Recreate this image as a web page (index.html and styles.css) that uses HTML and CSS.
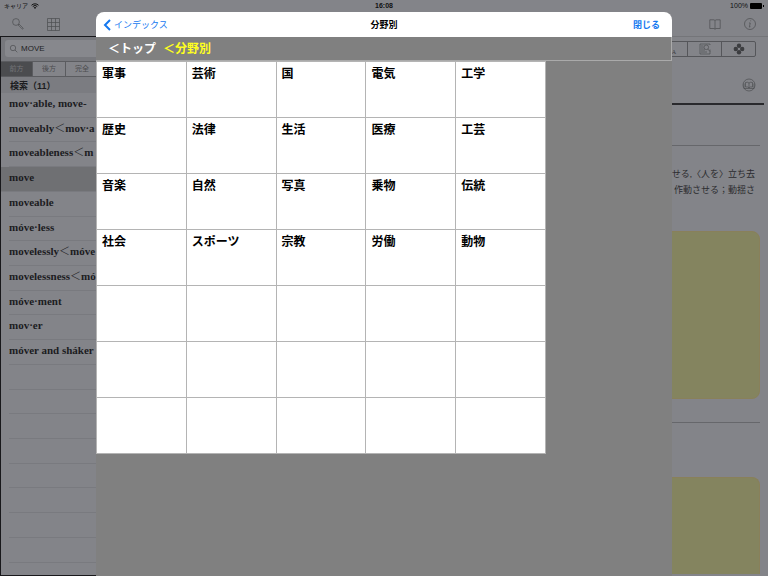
FILE: index.html
```html
<!DOCTYPE html>
<html lang="ja">
<head>
<meta charset="UTF-8">
<meta name="viewport" content="width=device-width, initial-scale=1">
<title>分野別</title>
<link rel="stylesheet" href="styles.css">
</head>
<body>

<div class="status">
    <span class="carrier">キャリア
        <svg width="8" height="6" viewBox="0 0 16 12"><path d="M1 4.5a10 10 0 0 1 14 0M3.5 7a6.500 6.500 0 0 1 9 0" fill="none" stroke="#111" stroke-width="2"/><path d="M5.500 9a3.600 3.600 0 0 1 5 0L8 12z" fill="#111"/></svg>
    </span>
    <span class="clock">16:08</span>
    <span class="battery">100%
        <svg width="14" height="6" viewBox="0 0 14 6"><rect width="12" height="6" rx="1"/><rect x="13" y="2" width="1" height="2"/></svg>
    </span>
</div>

<div class="toolbar">
    <button class="icon" aria-label="検索"><svg width="12" height="12" viewBox="0 0 12 12"><circle cx="4" cy="4" r="3.400"/><path d="M6.400 6.400L7 6l4 4q.5.700-.2 1t-1-.3L6.200 7z"/></svg></button>
    <button class="icon" aria-label="インデックス"><svg width="13" height="13" viewBox="0 0 13 13"><path d="M.5.500h12v12H.5zM4.500.500v12M8.500.500v12M.5 4.500h12M.5 8.500h12"/></svg></button>
    <span class="space"></span>
    <button class="icon" aria-label="辞書"><svg width="12" height="12" viewBox="0 0 12 12"><path d="M.8 1.800H5l1 .7 1-.7h4.200v8.700H7l-1 .7-1-.7H.8zM6 2.500v8.700"/></svg></button>
    <button class="icon" aria-label="情報"><svg width="12" height="12" viewBox="0 0 12 12"><circle cx="6" cy="6" r="5.500"/><path d="M5 5h1.300L5.300 9q.3.600 1.200-.3M6.300 2.800h.8"/></svg></button>
</div>

<div class="split">
    <div class="side">
        <div class="searchbar">
            <label class="field">
                <svg width="9" height="9" viewBox="0 0 9 9"><circle cx="4" cy="4" r="2.700"/><path d="M6 6l2.300 2.300"/></svg>
                <input type="text" value="MOVE" aria-label="検索語">
            </label>
        </div>
        <div class="tabs">
            <button class="active">前方</button>
            <button>後方</button>
            <button>完全</button>
        </div>
        <h2>検索（11）</h2>
        <ul class="words">
            <li>mov·able, move-</li>
            <li>moveably<i>＜</i>mov·a</li>
            <li>moveableness<i>＜</i>m</li>
            <li class="selected">move</li>
            <li>moveable</li>
            <li>móve·less</li>
            <li>movelessly<i>＜</i>móve</li>
            <li>movelessness<i>＜</i>mó</li>
            <li>móve·ment</li>
            <li>mov·er</li>
            <li>móver and sháker</li>
            <li></li>
            <li></li>
            <li></li>
            <li></li>
            <li></li>
            <li></li>
            <li></li>
            <li></li>
        </ul>
    </div>

    <div class="entry">
        <div class="segments">
            <button class="size">A</button>
            <button aria-label="本文検索"><svg width="12" height="12" viewBox="0 0 12 12"><path d="M11 6.500V11H1V1h10v1M2 3h2.500M2 5h2.500M2 7h4M2 9h6M8.800 6L11 8.500"/><circle cx="7.300" cy="4.300" r="2.300"/></svg></button>
            <button aria-label="移動"><svg class="clover" width="12" height="12" viewBox="0 0 12 12"><circle cx="6" cy="2.800" r="2.200"/><circle cx="6" cy="9.200" r="2.200"/><circle cx="2.800" cy="6" r="2.200"/><circle cx="9.200" cy="6" r="2.200"/></svg></button>
        </div>
        <div class="headword">
            <button class="icon" aria-label="単語帳"><svg width="14" height="14" viewBox="0 0 14 14"><circle cx="7" cy="7" r="6"/><path d="M3.500 4.500Q5.500 3.700 7 5q1.500-1.300 3.500-.5V9Q8.500 8.500 7 9.700 5.500 8.500 3.500 9zM7 5v4.700M2 5.500v5h10v-5"/></svg></button>
        </div>
        <div class="section"></div>
        <p>せる,〈人を〉立ち去<br>作動させる；動揺さ</p>
        <div class="card"></div>
        <div class="section rule"></div>
        <div class="card last"></div>
    </div>
</div>

<div class="modal" role="dialog" aria-labelledby="modalTitle">
    <div class="navbar">
        <button class="back"><svg width="8" height="12" viewBox="0 0 8 12"><path d="M7 1L2 6l5 5"/></svg>インデックス</button>
        <h1 id="modalTitle">分野別</h1>
        <button class="close">閉じる</button>
    </div>
    <nav class="crumbs">
        <a href="#">＜トップ</a>
        <a href="#" class="current">＜分野別</a>
    </nav>
    <div class="grid">
        <button>軍事</button><button>芸術</button><button>国</button><button>電気</button><button>工学</button>
        <button>歴史</button><button>法律</button><button>生活</button><button>医療</button><button>工芸</button>
        <button>音楽</button><button>自然</button><button>写真</button><button>乗物</button><button>伝統</button>
        <button>社会</button><button>スポーツ</button><button>宗教</button><button>労働</button><button>動物</button>
        <span></span><span></span><span></span><span></span><span></span>
        <span></span><span></span><span></span><span></span><span></span>
        <span></span><span></span><span></span><span></span><span></span>
    </div>
</div>

</body>
</html>
```

FILE: styles.css
```css
* { box-sizing: border-box; }
body { margin: 0; height: 100vh; overflow: hidden; position: relative; display: flex; flex-direction: column; background: #838489; color: #1c1c1f; font-family: "Liberation Sans", "Noto Sans CJK JP", sans-serif; }
button { margin: 0; padding: 0; border: 0; background: none; color: inherit; font: inherit; cursor: pointer; }
svg { display: block; flex: none; }
h1, h2, p, ul { margin: 0; padding: 0; }

/* status bar */
.status { display: grid; grid-template-columns: 1fr auto 1fr; align-items: center; height: 12px; padding: 0 4px; font-size: 7px; line-height: 12px; color: #111; }
.carrier, .battery { display: flex; align-items: center; gap: 3px; }
.carrier { font-size: 6px; }
.clock { font-weight: bold; }
.battery { justify-content: flex-end; gap: 2px; }

/* toolbar */
.toolbar { display: flex; align-items: center; height: 24px; padding: 0 12px; gap: 23px; }
.space { flex: 1; }
.icon svg, .segments svg, .field svg { fill: none; stroke: #4c4d50; stroke-width: 0.7; }

.split { flex: 1; min-height: 0; display: flex; }

/* word list */
.side { width: 240px; display: flex; flex-direction: column; border: solid #18181b; border-width: 1px 0 1px 1px; }
.searchbar { height: 24px; padding: 3px 4px; background: #77787d; }
.field { display: flex; align-items: center; height: 17px; padding: 0 4px; gap: 3px; border-radius: 3px; background: #87888d; }
.field input { flex: 1; min-width: 0; padding: 0; border: 0; outline: 0; background: none; color: #222225; font: 8px/16px "Liberation Sans", sans-serif; }
.tabs { display: flex; height: 16px; border: solid #5b5c60; border-width: 1px 0; }
.tabs button { width: 33px; border-right: 1px solid #5b5c60; font-size: 7px; line-height: 14px; color: #4c4d50; }
.tabs .active { width: 32px; background: #4b4c4f; color: #747579; }
.side h2 { height: 16px; padding-left: 9px; background: #7b7c81; font-size: 9px; line-height: 18px; }
.words { flex: 1; min-height: 0; display: grid; grid-template-rows: repeat(19, minmax(0, 2fr)) minmax(0, 1fr); list-style: none; font: bold 11px/20px "Liberation Serif", "Noto Sans CJK JP", serif; white-space: nowrap; overflow: hidden; }
.words li { margin-left: 8px; border-bottom: 1px solid #797a7f; overflow: hidden; }
.words i { font-style: normal; font-weight: 300; }
.words .selected { margin-left: 0; padding-left: 8px; background: #6f7073; }

/* dictionary entry */
.entry { flex: 1; min-width: 0; display: flex; flex-direction: column; padding: 0 8px 2px 16px; border-top: 1px solid #747579; }
.segments { display: flex; align-self: flex-end; height: 16px; margin: 4px 4px 0 0; border: 1px solid #55565a; border-radius: 2px; }
.segments button { display: flex; align-items: center; justify-content: center; width: 34px; border-left: 1px solid #55565a; }
.segments .size { align-items: flex-end; border-left: 0; padding-left: 8px; font: 6px/8px "Liberation Serif", serif; color: #3c3c3f; }
.segments .clover { fill: #3c3d40; stroke: none; }
.headword { display: flex; justify-content: flex-end; align-items: center; height: 48px; margin-right: -4px; padding: 10px 8px 0 0; border-bottom: 2px solid #29292d; }
.section { height: 41px; border-bottom: 1px solid #66676b; }
.entry p { margin: 20px 5px 0 0; text-align: right; font: 9px/16px "Liberation Serif", "Noto Sans CJK JP", serif; color: #2b2b2e; white-space: nowrap; }
.card { height: 168px; margin-top: 33px; border: 1px solid #89805a; border-radius: 8px; background: #84845f; }
.section.rule { height: 24px; }
.card.last { flex: 1; height: auto; margin-top: 54px; border-bottom: 0; border-radius: 8px 8px 0 0; }

/* category dialog */
.modal { position: absolute; top: 12px; bottom: 0; left: 0; right: 0; width: 75%; margin: 0 auto; display: flex; flex-direction: column; border-radius: 8px 8px 0 0; overflow: hidden; background: #808080; }
.navbar { display: grid; grid-template-columns: 1fr auto 1fr; align-items: center; height: 25px; padding: 0 12px 0 7px; background: #fff; font-size: 9px; line-height: 14px; color: #1478f0; }
.navbar h1 { padding-left: 5px; font-size: 9px; color: #000; }
.back { display: flex; align-items: center; gap: 3px; }
.back svg { fill: none; stroke: #1478f0; stroke-width: 2; }
.close { justify-self: end; font-weight: bold; }
.crumbs { display: flex; align-items: center; gap: 7px; height: 24px; padding-left: 12px; border: solid #aaa; border-width: 0 1px 1px 0; font-size: 12px; line-height: 20px; font-weight: bold; }
.crumbs a { color: #fff; text-decoration: none; }
.crumbs .current { color: #ffff1e; }
.grid { display: grid; grid-template-columns: repeat(5, 1fr); grid-auto-rows: 55px; gap: 1px; width: 450px; max-width: 100%; padding: 1px; background: #b4b4b4; }
.grid button, .grid span { background: #fff; }
.grid button { display: flex; align-items: flex-start; padding: 2px 5px; color: #000; font: bold 12px/20px "Liberation Serif", "Noto Sans CJK JP", serif; text-align: left; }
```
